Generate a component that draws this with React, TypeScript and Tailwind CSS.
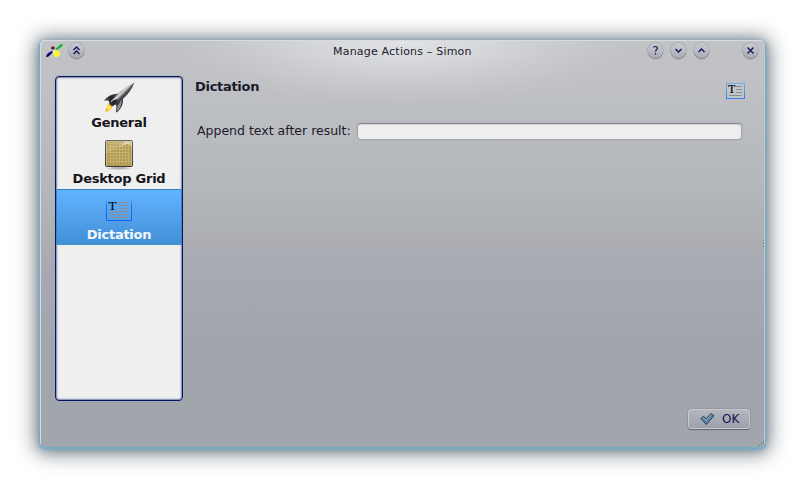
import type { ReactNode } from "react";

function RoundButton({ children, label }: { children: ReactNode; label: string }) {
  return (
    <button
      aria-label={label}
      className="flex h-[15px] w-[15px] items-center justify-center rounded-full bg-linear-to-b from-[#cbccd2] to-[#a9aab5] shadow-[0_1px_1px_#7b7d86,0_0_1px_0.5px_#96989f]"
    >
      <svg width="15" height="15" viewBox="0 0 15 15" fill="none" stroke="#171356" strokeWidth="1.4">
        {children}
      </svg>
    </button>
  );
}

function SimonLogo() {
  return (
    <svg width="18" height="16" viewBox="0 0 18 16">
      <path d="M9.500 6 14 2Q17-.6 16.500 2.200 16 4 13.500 5.300L10 7.300Z" fill="#05bd20" />
      <path d="M.2 13.500Q.2 11 3 9.600L6 8Q8 8.300 6.200 10L2.800 13.300Q1 14.600 .2 13.500Z" fill="#060568" />
      <path d="M8.300 7.500Q12.500 6.300 13.800 9.500 14.500 13.500 10.500 14 7.500 14 7.500 11Z" fill="#fdf72d" />
      <path d="M7 7 8.300 6.500 9 9 6.500 11Z" fill="#f5f5f5" />
      <circle cx="6.900" cy="5" r="1.800" fill="#64171c" />
    </svg>
  );
}

function Rocket() {
  return (
    <svg width="32" height="32" viewBox="0 0 32 32">
      <defs>
        <linearGradient id="hull" x1="15" y1="11" x2="20" y2="16" gradientUnits="userSpaceOnUse">
          <stop offset="0" stopColor="#707175" />
          <stop offset=".35" stopColor="#dcdcdf" />
          <stop offset=".6" stopColor="#85868a" />
          <stop offset="1" stopColor="#333438" />
        </linearGradient>
        <linearGradient id="fin" x1="1" y1="18" x2="15" y2="16" gradientUnits="userSpaceOnUse">
          <stop offset="0" stopColor="#6a6b6e" />
          <stop offset=".5" stopColor="#202124" />
          <stop offset="1" stopColor="#55565a" />
        </linearGradient>
        <radialGradient id="flame">
          <stop offset="0" stopColor="#fff3a0" />
          <stop offset=".5" stopColor="#ffdc3c" />
          <stop offset="1" stopColor="#f4af20" />
        </radialGradient>
      </defs>
      <path d="M6 21.500 9.500 24Q8.500 29.500 2.500 29.800 2 26 6 21.500Z" fill="url(#flame)" />
      <path d="M.8 18.700Q5 12.500 15.500 11.500L14 16 7 20.200 5 18.500Z" fill="url(#fin)" />
      <path d="M20 15.500Q21 24 14 30.500L13 30 13.500 24.500 12 21Z" fill="#37393e" />
      <path d="M19 17Q19 24 14 30L14.500 24Z" fill="#8e9094" />
      <path d="M31.300.4Q24 3.500 17.500 9.500L6.500 20.500 9.500 23.500 21 15.800Q28.500 8.500 31.300.4Z" fill="url(#hull)" />
      <path d="M31.300.4Q28 9 20.500 16L9.500 23.500 8.500 22.500Q22 13 31.300.4Z" fill="#46484d" />
      <path d="M6 19.500 14.500 17 13 22 9.500 24.300Q6 23.500 6 19.500Z" fill="#28292d" />
      <path d="M8 19.800 17 11.500" stroke="#d5d5d7" strokeWidth="1" />
      <path d="M6.500 21 9.800 24" stroke="#8d514b" strokeWidth="1" />
    </svg>
  );
}

function GridIcon() {
  return (
    <svg width="32" height="32" viewBox="0 0 32 32">
      <defs>
        <pattern id="mesh" x="4" y="2" width="3" height="3" patternUnits="userSpaceOnUse">
          <rect width="3" height="3" fill="#b09a50" />
          <path d="M0 .5H3M.5 0V3" stroke="#c5b170" strokeWidth="1" />
        </pattern>
        <linearGradient id="gloss" x1="0" y1="0" x2="1" y2="1">
          <stop offset="0" stopColor="#fff" stopOpacity=".1" />
          <stop offset="1" stopColor="#fff" stopOpacity=".55" />
        </linearGradient>
        <linearGradient id="frame" x1="0" y1="0" x2="0" y2="1">
          <stop offset="0" stopColor="#68655d" />
          <stop offset="1" stopColor="#3f3825" />
        </linearGradient>
      </defs>
      <ellipse cx="16" cy="30.500" rx="12" ry="1.500" fill="#d2d2d2" />
      <ellipse cx="16" cy="30" rx="8" ry="1" fill="#b4b4b4" />
      <rect x="2.500" y="2.500" width="27" height="26" rx="1" fill="#b39d58" stroke="url(#frame)" />
      <rect x="5" y="5" width="22" height="21" fill="url(#mesh)" />
      <path d="M3 3H26Q22 8 16 9.500 8 11 3 17Z" fill="url(#gloss)" opacity=".5" />
      <path d="M17 8.500 23 3H29V9Q26 4 17 8.500Z" fill="#fff" opacity=".45" />
      <path d="M3.500 28V3.500H28.500V28" fill="none" stroke="#e3d8ae" strokeOpacity=".5" />
    </svg>
  );
}

function LargeTextIcon() {
  return (
    <svg width="26" height="22" viewBox="0 0 26 22">
      <defs>
        <linearGradient id="edge" x1="0" y1="0" x2="0" y2="22" gradientUnits="userSpaceOnUse">
          <stop offset="0" stopColor="#1670ff" stopOpacity="0" />
          <stop offset=".3" stopColor="#1670f7" />
          <stop offset="1" stopColor="#0768f7" />
        </linearGradient>
      </defs>
      <path d="M.5 0V21.500H25.500V0" fill="none" stroke="url(#edge)" />
      <path d="M12 3.500H23M12 6.500H23M12 9.500H23M3 12.500H23M3 15.500H23M3 18.500H23" stroke="#92908e" />
      <text x="2.600" y="11" fontFamily="Liberation Serif, serif" fontSize="13" fill="#000" stroke="#000" strokeWidth=".15">T</text>
    </svg>
  );
}

function SmallTextIcon() {
  return (
    <svg width="19" height="16" viewBox="0 0 19 16">
      <defs>
        <linearGradient id="smallEdge" x1="0" y1="0" x2="0" y2="16" gradientUnits="userSpaceOnUse">
          <stop offset="0" stopColor="#79a9eb" />
          <stop offset="1" stopColor="#347ee4" />
        </linearGradient>
      </defs>
      <rect x=".5" y=".5" width="18" height="15" fill="#c1c4c9" stroke="url(#smallEdge)" />
      <path d="M10 3.500H16M10 6.500H16M10 9.500H16M3 12.500H16" stroke="#8b8d90" />
      <text x="2.300" y="10.200" fontFamily="Liberation Serif, serif" fontSize="11.500" fill="#000" stroke="#000" strokeWidth=".2">T</text>
    </svg>
  );
}

function Item({ icon, label, selected = false }: { icon: ReactNode; label: string; selected?: boolean }) {
  return (
    <li
      className={
        selected
          ? "flex h-14 flex-col items-center rounded-[2px] border-x border-t border-x-[#3c82c4] border-t-[#347fc5] bg-linear-to-b from-[#62b3ff] to-[#418fd5] text-[#f5f7fa]"
          : "flex h-14 flex-col items-center border-t border-transparent text-[#17131a]"
      }
    >
      <div className="flex h-9 items-center justify-center pt-[4px]">{icon}</div>
      <span className="text-[13px] leading-[17px] font-bold tracking-[-0.25px] whitespace-nowrap">{label}</span>
    </li>
  );
}

export default function App() {
  return (
    <main
      className="h-[487px] w-[805px] overflow-hidden bg-white p-10 text-[#1d1a2b]"
      style={{ fontFamily: '"DejaVu Sans", sans-serif' }}
    >
      <section className="relative flex h-[407px] w-[725px] flex-col rounded-[5px] bg-[radial-gradient(ellipse_235px_66px_at_50%_0,#e2e3e5_0%,#e2e3e5b0_30%,#e2e3e54d_62%,#e2e3e514_86%,#e2e3e500_100%),linear-gradient(#c2c3c7_0px,#bec0c4_50px,#b3b6ba_150px,#acaeb2_200px,#a7aab3_230px,#a1a5ac_300px)] shadow-[inset_1px_1px_0_#d9dcdf,inset_-1px_0_0_#c4cbd0,0_1px_1px_1px_#73acc8,0_2px_6px_1px_#6c99b0b0,0_2px_20px_4px_#5e666ee0]">
        <header className="flex h-[21px] shrink-0 items-center pr-[7px] pl-[6px]">
          <SimonLogo />
          <div className="ml-[5px]">
            <RoundButton label="Shade"><path d="m4.500 7 3-3 3 3m-6 4 3-3 3 3" /></RoundButton>
          </div>
          <h1 className="ml-[249px] w-[142px] pt-[3px] text-[11px] tracking-[0.2px] whitespace-nowrap">Manage Actions – Simon</h1>
          <div className="ml-auto flex items-center gap-2">
            <RoundButton label="Help"><path d="M5.500 4.500Q6 3.500 7.500 3.500q2 0 2 1.500c0 1.500-2 1.500-2 3.500M7.500 10v1.500" strokeWidth="1.200" /></RoundButton>
            <RoundButton label="Minimize"><path d="m4.500 6 3 3 3-3" /></RoundButton>
            <RoundButton label="Maximize"><path d="m4.500 9 3-3 3 3" /></RoundButton>
            <div className="ml-[26px]">
              <RoundButton label="Close"><path d="m4.500 4.500 6 6m0-6-6 6" /></RoundButton>
            </div>
          </div>
        </header>
        <div className="mt-[15px] flex h-[325px] shrink-0 pr-5 pl-[15px]">
          <ul className="h-full w-32 rounded-[4px] border border-[#07175b] bg-[#efefef] shadow-[inset_0_0_0_1px_#8d96b7,inset_0_0_1px_2px_#d2d5df,0_0_0_1px_#a8adbc60]">
            <Item icon={<Rocket />} label="General" />
            <Item icon={<GridIcon />} label="Desktop Grid" />
            <Item icon={<LargeTextIcon />} label="Dictation" selected />
          </ul>
          <div className="flex flex-1 flex-col pl-3">
            <div className="flex h-[45px] justify-between">
              <h2 className="pt-[2px] text-[13px] leading-[17px] font-bold tracking-[-0.3px]">Dictation</h2>
              <div className="pt-[7px]"><SmallTextIcon /></div>
            </div>
            <label className="flex h-5 items-center pl-[2px] text-[12.500px] whitespace-nowrap">
              <span className="w-[160px]">Append text after result:</span>
              <input className="mr-[3px] h-[17px] min-w-0 flex-1 rounded-[4px] border border-[#a5a8ad] border-t-[#898c92] bg-[#efefef] shadow-[0_0_0_1px_#b1b5b9,inset_0_1px_1px_#ccc] outline-none" />
            </label>
          </div>
        </div>
        <footer className="flex h-[46px] items-start justify-end pt-2 pr-[15px]">
          <button className="flex h-5 w-[62px] items-center gap-[7px] rounded-[3px] border border-[#c6c9ce] bg-linear-to-b from-[#b5b7be] to-[#9d9faa] pl-[11px] text-[12px] text-[#15104c] shadow-[0_1px_1px_#62666f,0_0_0_1px_#8c909880]">
            <svg width="15" height="14" viewBox="0 0 15 14">
              <path d="m.8 6.500 2.700-2.200 2.700 2.500L11 1.500l3 2.200L6.300 12.500Z" fill="#5b83a5" stroke="#293e54" strokeLinejoin="round" />
              <path d="m2.500 6.500 1-.8 2.800 2.700L11.300 3" fill="none" stroke="#8fb1ca" />
            </svg>
            OK
          </button>
        </footer>
        <svg className="absolute right-0 bottom-px h-2 w-2" viewBox="0 0 8 8" fill="#686c73">
          <path d="M6 3h1v1H6zM4 5h1v1H4zM6 5h1v1H6zM2 7h1v1H2zM4 7h1v1H4z" />
        </svg>
        <svg className="absolute top-[200px] right-0 h-[7px] w-[2px]" fill="#686c73">
          <path d="M0 0h1v1H0zM0 3h1v1H0zM0 6h1v1H0z" />
        </svg>
      </section>
    </main>
  );
}
